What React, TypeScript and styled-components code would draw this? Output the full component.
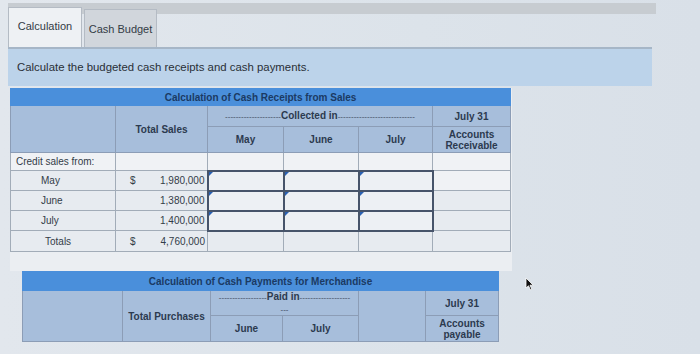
import React from "react";
import styled, { createGlobalStyle } from "styled-components";

const GlobalStyle = createGlobalStyle`
  html, body { margin: 0; padding: 0; }
  body {
    width: 700px;
    height: 354px;
    overflow: hidden;
    background: #dde3ea;
    font-family: "Liberation Sans", Arial, sans-serif;
    color: #2f3a48;
  }
`;

const Page = styled.div`
  position: relative;
  width: 700px;
  height: 354px;
  overflow: hidden;
  background: linear-gradient(90deg, #e2e7ed 0%, #dce3ea 60%, #d9e0e8 100%);
`;

const TabRow = styled.div`
  display: flex;
  align-items: flex-end;
  gap: 2px;
  height: 40px;
  padding: 7px 0 0 8px;
  background: linear-gradient(#c7ccd1, #c7ccd1) 8px 3px / 648px 11px no-repeat;
`;

const Tab = styled.div<{ $active?: boolean }>`
  box-sizing: border-box;
  width: ${(p) => (p.$active ? 74 : 73)}px;
  height: ${(p) => (p.$active ? 40 : 38)}px;
  display: flex;
  align-items: center;
  justify-content: center;
  padding-bottom: ${(p) => (p.$active ? 3 : 0)}px;
  font-size: 11px;
  color: #333b45;
  border: 1px solid #b4bbc4;
  border-bottom: none;
  background: ${(p) => (p.$active ? "#eef1f4" : "#d1d6dc")};
`;

const Instruction = styled.div`
  box-sizing: border-box;
  width: 644px;
  height: 39px;
  margin-left: 8px;
  padding: 0 9px 2px;
  display: flex;
  align-items: center;
  border-top: 2px solid #a6b6c7;
  background: #bcd3ea;
  font-size: 11.4px;
  color: #2a2f36;
`;

const Panel = styled.div`
  width: 502px;
  margin: 2px 0 0 10px;
  padding-bottom: 19px;
  background: #ebeef2;
`;

const Table = styled.table<{ $width: number }>`
  width: ${(p) => p.$width}px;
  border-collapse: collapse;
  table-layout: fixed;
  font-size: 10px;
`;

const SecondTable = styled(Table)`
  margin: 0 0 0 22px;
`;

const Title = styled.th<{ $h: number }>`
  height: ${(p) => p.$h}px;
  padding: 0;
  background: #4a8fdb;
  color: #1b3a63;
  font-weight: bold;
  text-align: center;
  border: 1px solid #4a8fdb;
`;

const Head = styled.th<{ $h?: number }>`
  height: ${(p) => (p.$h ? `${p.$h}px` : "auto")};
  padding: 0 2px;
  background: #a7bedb;
  color: #2c3a4f;
  font-weight: bold;
  text-align: center;
  line-height: 11px;
  border: 1px solid #8c9db6;
  white-space: nowrap;
  overflow: hidden;
`;

const Dashed = styled.span`
  font-size: 8px;
  font-weight: normal;
  color: #3b4658;
`;

const Row = styled.tr<{ $h: number }>`
  height: ${(p) => p.$h}px;
`;

const Cell = styled.td<{ $indent?: number; $plain?: boolean }>`
  padding: 0 0 0 ${(p) => p.$indent ?? 5}px;
  background: ${(p) => (p.$plain ? "#f0f2f5" : "#e7ebf0")};
  border: 1px solid #a2acb8;
  color: #333c48;
  white-space: nowrap;
`;

const Amount = styled.td`
  padding: 0 2px 0 14px;
  background: #e7ebf0;
  border: 1px solid #a2acb8;
  color: #333c48;
`;

const AmountInner = styled.div`
  display: flex;
  justify-content: space-between;
`;

const InputCell = styled.td`
  position: relative;
  padding: 0;
  background: #edf0f4;
  border: 2px solid #47546a;

  &::before {
    content: "";
    position: absolute;
    top: 0;
    left: 0;
    border-top: 4px solid #2b61b2;
    border-right: 4px solid transparent;
  }
`;

const Cursor = styled.svg`
  position: absolute;
  left: 525px;
  top: 277px;
`;

const sales = [
  { month: "May", dollar: true, value: "1,980,000" },
  { month: "June", dollar: false, value: "1,380,000" },
  { month: "July", dollar: false, value: "1,400,000" },
];

const App: React.FC = () => {
  return (
    <Page>
      <GlobalStyle />
      <TabRow>
        <Tab $active>Calculation</Tab>
        <Tab>Cash Budget</Tab>
      </TabRow>
      <Instruction>Calculate the budgeted cash receipts and cash payments.</Instruction>

      <Panel>
        <Table $width={500}>
          <colgroup>
            <col style={{ width: 105 }} />
            <col style={{ width: 92 }} />
            <col style={{ width: 76 }} />
            <col style={{ width: 75 }} />
            <col style={{ width: 74 }} />
            <col style={{ width: 78 }} />
          </colgroup>
          <thead>
            <tr>
              <Title colSpan={6} $h={16}>
                Calculation of Cash Receipts from Sales
              </Title>
            </tr>
            <tr>
              <Head rowSpan={2} />
              <Head rowSpan={2}>Total Sales</Head>
              <Head colSpan={3} $h={20}>
                <Dashed>---------------------</Dashed>Collected in<Dashed>-----------------------------</Dashed>
              </Head>
              <Head $h={20}>July 31</Head>
            </tr>
            <tr>
              <Head $h={25}>May</Head>
              <Head>June</Head>
              <Head>July</Head>
              <Head>
                Accounts
                <br />
                Receivable
              </Head>
            </tr>
          </thead>
          <tbody>
            <Row $h={18}>
              <Cell $plain>Credit sales from:</Cell>
              <Cell $plain />
              <Cell $plain />
              <Cell $plain />
              <Cell $plain />
              <Cell $plain />
            </Row>
            {sales.map((s, i) => (
              <Row $h={20} key={s.month}>
                <Cell $indent={30}>{s.month}</Cell>
                <Amount>
                  <AmountInner>
                    <span>{s.dollar ? "$" : ""}</span>
                    <span>{s.value}</span>
                  </AmountInner>
                </Amount>
                <InputCell />
                <InputCell />
                <InputCell />
                <Cell $plain={i === 0} />
              </Row>
            ))}
            <Row $h={21}>
              <Cell $indent={34}>Totals</Cell>
              <Amount>
                <AmountInner>
                  <span>$</span>
                  <span>4,760,000</span>
                </AmountInner>
              </Amount>
              <Cell />
              <Cell />
              <Cell />
              <Cell />
            </Row>
          </tbody>
        </Table>
      </Panel>

      <SecondTable $width={476}>
        <colgroup>
          <col style={{ width: 100 }} />
          <col style={{ width: 88 }} />
          <col style={{ width: 72 }} />
          <col style={{ width: 76 }} />
          <col style={{ width: 67 }} />
          <col style={{ width: 73 }} />
        </colgroup>
        <thead>
          <tr>
            <Title colSpan={6} $h={18}>
              Calculation of Cash Payments for Merchandise
            </Title>
          </tr>
          <tr>
            <Head rowSpan={2} />
            <Head rowSpan={2}>Total Purchases</Head>
            <Head colSpan={2} $h={24}>
              <Dashed>------------------</Dashed>Paid in<Dashed>-------------------</Dashed>
              <br />
              <Dashed>---</Dashed>
            </Head>
            <Head rowSpan={2} />
            <Head>July 31</Head>
          </tr>
          <tr>
            <Head $h={25}>June</Head>
            <Head>July</Head>
            <Head>
              Accounts
              <br />
              payable
            </Head>
          </tr>
        </thead>
      </SecondTable>

      <Cursor width="9" height="14" viewBox="0 0 9 14">
        <path d="M1 1 L1 11 L3.5 8.8 L5.4 12.8 L6.8 12.1 L5 8.2 L8.2 8.2 Z" fill="#111" stroke="#fff" strokeWidth="0.8" />
      </Cursor>
    </Page>
  );
};

export default App;
